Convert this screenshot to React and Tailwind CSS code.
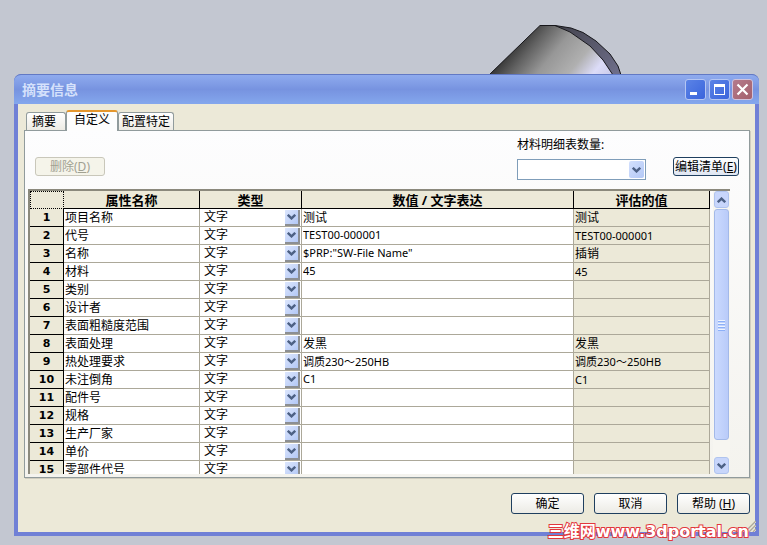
import { useState } from 'react'

const tabs = ['摘要', '自定义', '配置特定']

const rows = [
  { name: '项目名称', value: '测试', result: '测试' },
  { name: '代号', value: 'TEST00-000001', result: 'TEST00-000001' },
  { name: '名称', value: '$PRP:"SW-File Name"', result: '插销' },
  { name: '材料', value: '45', result: '45' },
  { name: '类别', value: '', result: '' },
  { name: '设计者', value: '', result: '' },
  { name: '表面粗糙度范围', value: '', result: '' },
  { name: '表面处理', value: '发黑', result: '发黑' },
  { name: '热处理要求', value: '调质230～250HB', result: '调质230～250HB' },
  { name: '未注倒角', value: 'C1', result: 'C1' },
  { name: '配件号', value: '', result: '' },
  { name: '规格', value: '', result: '' },
  { name: '生产厂家', value: '', result: '' },
  { name: '单价', value: '', result: '' },
  { name: '零部件代号', value: '', result: '' },
]

// Latin text is set one pixel smaller than Chinese text
const textSize = (text) => (/\w/.test(text) ? 'text-[11px]' : 'text-[12px]')

function Chevron({ up }) {
  return (
    <svg viewBox="0 0 9 6" className={up ? 'h-[6px] w-[9px] rotate-180' : 'h-[6px] w-[9px]'} aria-hidden="true">
      <path d="M0.8 0.8 L4.5 4.4 L8.2 0.8" fill="none" stroke="#4d6185" strokeWidth="2.4" />
    </svg>
  )
}

function Cylinder() {
  return (
    <svg viewBox="0 0 136 52" className="absolute top-[23px] left-[487px] h-[52px] w-[136px]" aria-hidden="true">
      <defs>
        <linearGradient id="side" gradientUnits="userSpaceOnUse" x1="28" y1="24" x2="100" y2="84">
          <stop offset="0" stopColor="#3c3c3c" />
          <stop offset="0.14" stopColor="#626262" />
          <stop offset="0.36" stopColor="#979797" />
          <stop offset="0.62" stopColor="#b0b0b0" />
          <stop offset="0.82" stopColor="#dcdcf8" />
          <stop offset="1" stopColor="#c8c8e8" />
        </linearGradient>
        <linearGradient id="face" x1="0" y1="0" x2="1" y2="1">
          <stop offset="0" stopColor="#43434d" />
          <stop offset="1" stopColor="#70708c" />
        </linearGradient>
      </defs>
      <path d="M2 52 L53 2.5 L68 2.5 L83 9 L103 23 L116 37 L126 52 Z" fill="url(#side)" />
      <path d="M68 2.5 L84 5 L96 9.5 L109 18 L123 31 L131 43 L134 52 L126 52 L116 37 L103 23 L83 9 Z" fill="url(#face)" />
      <path
        d="M2 52 L53 2.5 L68 2.5 L84 5 L96 9.5 L109 18 L123 31 L131 43 L134 52 M68 2.5 L83 9 L103 23 L116 37 L126 52"
        fill="none"
        stroke="#17171b"
        strokeWidth="1"
      />
    </svg>
  )
}

function TitleBar() {
  return (
    <div className="flex h-[30px] items-center gap-[2px] rounded-t-[7px] border-t border-[#6279c4] bg-linear-to-b from-[#8fabee] via-[#7793e0] to-[#84a7ed] pr-[6px] pl-2">
      <h1 className="mr-auto text-[14px] leading-4 font-bold text-[#d5e1fb]">摘要信息</h1>
      <button aria-label="Minimize" className="flex h-[21px] w-[21px] items-center justify-center rounded-[3px] border border-[#b5c6f3] bg-linear-to-br from-[#5b83e6] to-[#3a64dc]">
        <svg viewBox="0 0 19 19" className="size-[19px]"><path d="M4 12h7v3H4z" fill="#fff" /></svg>
      </button>
      <button aria-label="Maximize" className="ml-px flex h-[21px] w-[21px] items-center justify-center rounded-[3px] border border-[#b5c6f3] bg-linear-to-br from-[#5b83e6] to-[#3a64dc]">
        <svg viewBox="0 0 19 19" className="size-[19px]"><path d="M4 4h11v11H4zM5 7v7h9V7z" fill="#fff" fillRule="evenodd" /></svg>
      </button>
      <button aria-label="Close" className="flex h-[21px] w-[21px] items-center justify-center rounded-[3px] border border-[#d0c3dc] bg-linear-to-br from-[#b47b8c] to-[#a4606c]">
        <svg viewBox="0 0 19 19" className="size-[19px]"><path d="M4.5 4.5 L14.5 14.5 M14.5 4.5 L4.5 14.5" stroke="#fff" strokeWidth="2.2" /></svg>
      </button>
    </div>
  )
}

function DialogButton({ children }) {
  return (
    <button className="h-[21px] w-[73px] rounded-[3px] border border-[#1f3f5f] bg-linear-to-b from-white to-[#ecebe5] leading-4 whitespace-nowrap">
      {children}
    </button>
  )
}

function PropertyTable() {
  return (
    <table className="w-full min-w-0 flex-1 table-fixed border-separate border-spacing-0">
      <colgroup>
        <col className="w-[34px]" />
        <col className="w-[136px]" />
        <col className="w-[102px]" />
        <col />
        <col className="w-[136px]" />
      </colgroup>
      <thead>
        <tr className="h-[18px] bg-[#ece9d8] text-[13px] leading-4 font-bold">
          <td className="border border-dotted border-black p-0" />
          <th className="border-r border-b border-black p-0">属性名称</th>
          <th className="border-r border-b border-black p-0">类型</th>
          <th className="border-r border-b border-black p-0">数值 / 文字表达</th>
          <th className="border-r border-b border-black p-0">评估的值</th>
        </tr>
      </thead>
      <tbody>
        {rows.map((row, i) => (
          <tr key={row.name} className="h-[18px] leading-4">
            <th className="border-r border-b border-black bg-[#ece9d8] p-0 font-['DejaVu_Sans'] text-[11px]">{i + 1}</th>
            <td className="border-r border-b border-[#aca899] bg-white p-0">
              <input aria-label={`属性名称 ${i + 1}`} defaultValue={row.name} className="block h-[17px] w-full pb-[2px] pl-px leading-[15px] outline-none" />
            </td>
            <td className="border-r border-b border-[#aca899] bg-white p-0">
              <div className="relative">
                <select aria-label={`类型 ${i + 1}`} className="block h-[17px] w-full appearance-none pb-px pl-1 outline-none">
                  <option>文字</option>
                </select>
                <span className="pointer-events-none absolute top-px right-px flex h-4 w-[15px] items-center justify-center border-r-2 border-b-2 border-[#8c8f93] bg-linear-to-br from-[#dce6fd] to-[#b3c8f6]">
                  <Chevron />
                </span>
              </div>
            </td>
            <td className="border-r border-b border-[#aca899] bg-white p-0">
              <input
                aria-label={`数值 ${i + 1}`}
                defaultValue={row.value}
                className={`block h-[17px] w-full pb-[2px] pl-px leading-[15px] outline-none ${textSize(row.value)}`}
              />
            </td>
            <td className={`truncate border-r border-b border-[#aca899] bg-[#ece9d8] p-0 pl-px ${textSize(row.result)}`}>{row.result}</td>
          </tr>
        ))}
      </tbody>
    </table>
  )
}

function ScrollBar() {
  return (
    <div className="ml-[3px] flex w-[17px] flex-col gap-px bg-[#f7f6f1] px-px">
      <button aria-label="Scroll up" className="flex h-[17px] items-center justify-center rounded-[3px] border border-[#b0c4ee] bg-[#c8d6fb]">
        <Chevron up />
      </button>
      <div className="flex flex-1 flex-col items-center justify-center gap-[2px] rounded-[3px] border border-[#a3b9e8] bg-linear-to-r from-[#cbdafe] to-[#b9cbf9]">
        <i className="h-px w-[7px] bg-[#eef4fe] shadow-[0_1px_0_#8cb0f8]" />
        <i className="h-px w-[7px] bg-[#eef4fe] shadow-[0_1px_0_#8cb0f8]" />
        <i className="h-px w-[7px] bg-[#eef4fe] shadow-[0_1px_0_#8cb0f8]" />
        <i className="h-px w-[7px] bg-[#eef4fe] shadow-[0_1px_0_#8cb0f8]" />
      </div>
      <button aria-label="Scroll down" className="mt-4 flex h-[17px] items-center justify-center rounded-[3px] border border-[#b0c4ee] bg-[#c8d6fb]">
        <Chevron />
      </button>
    </div>
  )
}

export default function App() {
  const [active, setActive] = useState('自定义')

  return (
    <div className="relative min-h-screen bg-[#c3c7d1] pt-[74px] pr-2 pb-[9px] pl-[14px] font-['Noto_Sans','Noto_Sans_CJK_SC',sans-serif] text-[12px] text-black">
      <Cylinder />
      <main className="relative rounded-t-[8px] bg-[#6f80d4]">
        <TitleBar />
        <div className="border-x-4 border-b-4 border-[#7080d6] bg-[#ece9d8]">
          <div role="tablist" className="flex h-[26px] items-end pl-2">
            {tabs.map((tab) => (
              <button
                key={tab}
                role="tab"
                aria-selected={tab === active}
                onClick={() => setActive(tab)}
                className={
                  tab === active
                    ? 'relative -mb-px h-[21px] rounded-t-[3px] border-x border-t-2 border-x-[#919b9c] border-t-[#e5972d] bg-[#fdfdfd] px-[7px] pb-1 leading-4'
                    : 'h-[18px] rounded-t-[3px] border-x border-t border-[#919b9c] bg-linear-to-b from-white to-[#edebe4] px-[3px] leading-4 first:pr-[9px] first:pl-[5px]'
                }
              >
                {tab}
              </button>
            ))}
          </div>

          <section className="mr-[5px] ml-[6px] border border-[#919b9c] bg-linear-to-b from-[#fdfdfe] to-[#f4f3ee] pb-[3px] shadow-[1px_1px_0_#d0cdbf]">
            <div className="flex h-[58px] items-start pt-[6px] pr-[10px] pl-[10px]">
              <button disabled className="mt-5 h-[19px] w-[70px] rounded-[3px] border border-[#c9c7ba] bg-[#f5f4ea] leading-4 text-[#a1a192]">
                删除(<u>D</u>)
              </button>
              <div className="ml-auto w-[129px]">
                <label htmlFor="bom" className="block leading-4">材料明细表数量:</label>
                <div className="relative mt-[6px]">
                  <select id="bom" className="block h-[21px] w-full appearance-none border border-[#7f9db9] bg-white" />
                  <span className="pointer-events-none absolute top-[2px] right-[2px] flex h-[17px] w-[15px] items-center justify-center rounded-[2px] bg-linear-to-br from-[#d3e0fd] to-[#b3c8f6]">
                    <Chevron />
                  </span>
                </div>
              </div>
              <button className="mt-5 ml-[27px] h-[19px] w-[66px] rounded-[3px] border border-[#1f3f5f] bg-linear-to-b from-white to-[#dfe6f2] leading-4 whitespace-nowrap">
                编辑清单(<u>E</u>)
              </button>
            </div>
            <div className="mr-[19px] ml-[3px] flex h-[285px] items-start overflow-hidden border-t-2 border-l-2 border-[#8b897c]">
              <PropertyTable />
              <div className="flex h-full">
                <ScrollBar />
              </div>
            </div>
          </section>

          <div className="flex justify-end gap-[10px] pt-[15px] pr-[5px] pb-[18px]">
            <DialogButton>确定</DialogButton>
            <DialogButton>取消</DialogButton>
            <DialogButton>帮助 (<u>H</u>)</DialogButton>
          </div>
        </div>
        <svg viewBox="0 0 12 12" className="absolute right-[3px] bottom-[4px] size-3" aria-hidden="true">
          <path d="M2 12 L12 2 M6 12 L12 6 M10 12 L12 10" stroke="#fff" strokeWidth="1" />
          <path d="M1 12 L12 1 M5 12 L12 5 M9 12 L12 9" stroke="#aca899" strokeWidth="1.5" />
        </svg>
      </main>
      <a
        href="#"
        className="absolute right-[18px] bottom-[5px] font-['DejaVu_Sans','Noto_Sans_CJK_SC',sans-serif] text-[16px] leading-4 font-bold whitespace-nowrap text-white [-webkit-text-stroke:2px_#e2373c] [paint-order:stroke_fill]"
      >
        三维网www.3dportal.cn
      </a>
    </div>
  )
}
